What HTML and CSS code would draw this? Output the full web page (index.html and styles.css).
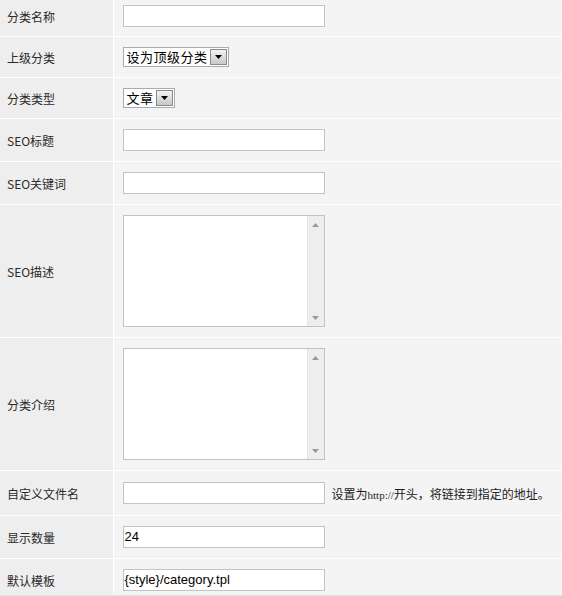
FILE: index.html
```html
<!DOCTYPE html>
<html lang="zh-CN">
<head>
<meta charset="utf-8">
<title>分类编辑</title>
<link rel="stylesheet" href="styles.css">
</head>
<body>
<table class="form">
  <colgroup><col class="col-label"><col class="col-field"></colgroup>
  <tr class="row row-first">
    <td class="label">分类名称</td>
    <td class="field"><div class="input"></div></td>
  </tr>
  <tr class="row row-select">
    <td class="label">上级分类</td>
    <td class="field">
      <div class="select"><span class="select-text">设为顶级分类</span><span class="select-btn"><svg width="7" height="4" viewBox="0 0 7 4"><path d="M0 0H7L3.5 4Z" fill="#000"/></svg></span></div>
    </td>
  </tr>
  <tr class="row row-select">
    <td class="label">分类类型</td>
    <td class="field">
      <div class="select"><span class="select-text">文章</span><span class="select-btn"><svg width="7" height="4" viewBox="0 0 7 4"><path d="M0 0H7L3.5 4Z" fill="#000"/></svg></span></div>
    </td>
  </tr>
  <tr class="row">
    <td class="label">SEO标题</td>
    <td class="field"><div class="input"></div></td>
  </tr>
  <tr class="row">
    <td class="label">SEO关键词</td>
    <td class="field"><div class="input"></div></td>
  </tr>
  <tr class="row">
    <td class="label">SEO描述</td>
    <td class="field">
      <div class="textarea"><div class="ta-body"></div><div class="ta-scroll"><svg width="7" height="4" viewBox="0 0 7 4"><path d="M0 4H7L3.5 0Z" fill="#9a9a9a"/></svg><svg width="7" height="4" viewBox="0 0 7 4"><path d="M0 0H7L3.5 4Z" fill="#9a9a9a"/></svg></div></div>
    </td>
  </tr>
  <tr class="row">
    <td class="label">分类介绍</td>
    <td class="field">
      <div class="textarea"><div class="ta-body"></div><div class="ta-scroll"><svg width="7" height="4" viewBox="0 0 7 4"><path d="M0 4H7L3.5 0Z" fill="#9a9a9a"/></svg><svg width="7" height="4" viewBox="0 0 7 4"><path d="M0 0H7L3.5 4Z" fill="#9a9a9a"/></svg></div></div>
    </td>
  </tr>
  <tr class="row row-tall">
    <td class="label">自定义文件名</td>
    <td class="field">
      <div class="inline"><div class="input"></div><span class="note">设置为<span class="serif">http://</span>开头，将链接到指定的地址。</span></div>
    </td>
  </tr>
  <tr class="row">
    <td class="label">显示数量</td>
    <td class="field"><div class="input">24</div></td>
  </tr>
  <tr class="row row-last">
    <td class="label">默认模板</td>
    <td class="field"><div class="input">{style}/category.tpl</div></td>
  </tr>
</table>
</body>
</html>
```

FILE: styles.css
```css
html, body {
  margin: 0;
  padding: 0;
  background: #f5f5f5;
  overflow: hidden;
}

body {
  font-family: "Noto Sans CJK SC", "Liberation Sans", sans-serif;
  font-size: 12px;
  color: #333;
}

.form {
  width: 562px;
  table-layout: fixed;
  border-collapse: collapse;
  border-spacing: 0;
}

.col-label {
  width: 113px;
}

.row td {
  border-bottom: 1px solid #ffffff;
  padding: 10px 0 10px 9px;
  vertical-align: middle;
}

.row .label {
  padding-left: 7px;
  background: #eeeeee;
  border-right: 1px solid #ffffff;
  font-size: 12px;
  color: #2a2a2a;
  white-space: nowrap;
}

.row .field {
  background: #f4f4f4;
}

.row-first td {
  padding-top: 5px;
  padding-bottom: 9px;
}

.row-tall td {
  padding-top: 11px;
  padding-bottom: 11px;
}

.row-last td {
  padding-top: 10px;
  padding-bottom: 4px;
  border-bottom: 1px solid #dde8d6;
}

.input {
  box-sizing: border-box;
  width: 202px;
  height: 22px;
  background: #fff;
  border: 1px solid #c3c3c3;
  font-family: "Liberation Sans", Arial, sans-serif;
  font-size: 13px;
  line-height: 20px;
  padding-left: 1px;
  color: #000;
}

.select {
  display: inline-flex;
  align-items: center;
  box-sizing: border-box;
  height: 20px;
  background: #fff;
  border: 1px solid #a5acb2;
  padding: 1px;
}

.select-text {
  font-size: 13px;
  line-height: 16px;
  color: #000;
  padding: 0 2px 0 2px;
  letter-spacing: 0.5px;
}

.select-btn {
  display: flex;
  align-items: center;
  justify-content: center;
  box-sizing: border-box;
  width: 17px;
  height: 16px;
  border: 1px solid #8a8a8a;
  background: linear-gradient(#f2f2f2, #c8c8c8);
}

.textarea {
  display: flex;
  box-sizing: border-box;
  width: 202px;
  height: 112px;
  background: #fff;
  border: 1px solid #c3c3c3;
}

.ta-body {
  flex: 1;
}

.ta-scroll {
  width: 16px;
  background: #eeeeee;
  border-left: 1px solid #e4e4e4;
  display: flex;
  flex-direction: column;
  align-items: center;
  justify-content: space-between;
  padding: 7px 0 6px;
}

.inline {
  display: flex;
  align-items: center;
  gap: 7px;
}

.note {
  font-size: 12px;
  color: #222;
  white-space: nowrap;
}

.serif {
  font-family: "Liberation Serif", "Times New Roman", serif;
  font-size: 11px;
}
```
